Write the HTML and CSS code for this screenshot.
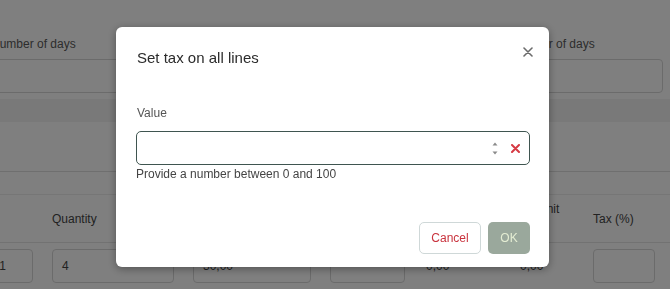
FILE: index.html
```html
<!DOCTYPE html>
<html>
<head>
<meta charset="utf-8">
<link rel="stylesheet" href="styles.css">
</head>
<body>
<div class="page">
  <div class="fields">
    <div class="field">
      <div class="field-label">Number of days</div>
      <div class="field-box"></div>
    </div>
    <div class="field">
      <div class="field-label">Number of days</div>
      <div class="field-box"></div>
    </div>
  </div>
  <div class="band"></div>
  <div class="blank"></div>
  <div class="sub"></div>
  <div class="lines-head">
    <div class="th"></div>
    <div class="th">Quantity</div>
    <div class="th"></div>
    <div class="th"></div>
    <div class="th"></div>
    <div class="th th-two">Per unit<br>price</div>
    <div class="th">Tax (%)</div>
  </div>
  <div class="lines-row">
    <div class="cell box end">1</div>
    <div class="cell box">4</div>
    <div class="cell box">30,00</div>
    <div class="cell box"></div>
    <div class="cell">0,00</div>
    <div class="cell">0,00</div>
    <div class="cell box"></div>
  </div>
</div>
<div class="overlay"></div>
<div class="modal">
  <div class="modal-head">
    <h2 class="modal-title">Set tax on all lines</h2>
    <button class="close" type="button" aria-label="Close">
      <svg width="10" height="10" viewBox="0 0 10 10"><path d="M1 1 L9 9 M9 1 L1 9" stroke="#6b6b6b" stroke-width="1.6" stroke-linecap="round"/></svg>
    </button>
  </div>
  <label class="value-label">Value</label>
  <div class="input">
    <span class="spin">
      <svg width="6" height="13" viewBox="0 0 6 13"><path d="M3 0.5 L5.5 3.5 L0.5 3.5 Z" fill="#8a8a8a"/><path d="M0.5 9.5 L5.5 9.5 L3 12.5 Z" fill="#8a8a8a"/></svg>
    </span>
    <span class="clear">
      <svg width="9" height="9" viewBox="0 0 9 9"><path d="M1 1 L8 8 M8 1 L1 8" stroke="#d63a43" stroke-width="2" stroke-linecap="round"/></svg>
    </span>
  </div>
  <div class="help">Provide a number between 0 and 100</div>
  <div class="modal-foot">
    <button class="btn btn-cancel" type="button">Cancel</button>
    <button class="btn btn-ok" type="button">OK</button>
  </div>
</div>
</body>
</html>
```

FILE: styles.css
```css
html, body {
  margin: 0;
  padding: 0;
  background: #ffffff;
  font-family: "Liberation Sans", Arial, sans-serif;
  overflow: hidden;
}
.page {
  width: 670px;
  height: 289px;
  overflow: hidden;
}
.fields {
  display: flex;
  justify-content: space-between;
  margin-left: -9px;
  width: 672px;
  padding-top: 36px;
  padding-bottom: 6px;
}
.field {
  width: 153px;
}
.field-label {
  font-size: 12px;
  line-height: 16px;
  color: #5a5a5a;
  margin-bottom: 7px;
}
.field-box {
  height: 32px;
  border: 1px solid #d6d6d6;
  border-radius: 4px;
}
.band {
  height: 23px;
  background: #f2f2f2;
}
.blank {
  height: 49px;
  border-bottom: 1px solid #dedede;
}
.sub {
  height: 22px;
  border-bottom: 1px solid #ececec;
}
.lines-head, .lines-row {
  display: grid;
  grid-template-columns: 73px 122px 118px 75px 75px 56px 62px;
  column-gap: 19px;
  margin-left: -40px;
}
.lines-head {
  height: 47px;
  align-items: center;
  border-bottom: 1px solid #e4e4e4;
}
.th {
  font-size: 12px;
  line-height: 20px;
  color: #444;
}
.th-two {
  white-space: nowrap;
}
.lines-row {
  margin-top: 6px;
  height: 34px;
}
.cell {
  font-size: 12px;
  color: #444;
  display: flex;
  align-items: center;
  padding-left: 2px;
}
.cell.box {
  border: 1px solid #d6d6d6;
  border-radius: 4px;
  padding-left: 9px;
}
.cell.end {
  justify-content: flex-end;
  padding-right: 26px;
}
.overlay {
  position: fixed;
  inset: 0;
  background: rgba(0, 0, 0, 0.5);
}
.modal {
  position: fixed;
  left: 116px;
  top: 27px;
  width: 433px;
  height: 240px;
  box-sizing: border-box;
  padding: 0 19px 13px 21px;
  background: #ffffff;
  border-radius: 6px;
  box-shadow: 0 2px 8px rgba(0, 0, 0, 0.35);
  display: flex;
  flex-direction: column;
}
.modal-head {
  display: flex;
  justify-content: space-between;
  align-items: flex-start;
}
.modal-title {
  margin: 21px 0 0 0;
  font-size: 15px;
  line-height: 20px;
  font-weight: normal;
  color: #2b2b2b;
}
.close {
  margin: 20px -3px 0 0;
  padding: 0;
  border: 0;
  background: none;
  width: 10px;
  height: 10px;
  display: flex;
}
.value-label {
  margin-top: 37px;
  font-size: 12px;
  line-height: 16px;
  color: #555;
}
.input {
  margin-top: 10px;
  margin-left: -1px;
  height: 34px;
  box-sizing: border-box;
  border: 1px solid #3f5550;
  border-radius: 5px;
  display: flex;
  align-items: center;
  justify-content: flex-end;
  padding-right: 9px;
  gap: 13px;
}
.spin {
  display: flex;
  margin-top: 1px;
}
.clear {
  display: flex;
  margin-top: 1px;
}
.help {
  margin-top: 1px;
  margin-left: -1px;
  font-size: 12px;
  line-height: 16px;
  color: #444;
}
.modal-foot {
  margin-top: auto;
  display: flex;
  justify-content: flex-end;
  gap: 7px;
}
.btn {
  height: 32px;
  border-radius: 5px;
  font-family: "Liberation Sans", Arial, sans-serif;
  font-size: 12px;
  padding: 0;
}
.btn-cancel {
  width: 62px;
  background: #ffffff;
  border: 1px solid #cfd8d8;
  color: #c9333e;
}
.btn-ok {
  width: 42px;
  background: #9aa89c;
  border: 0;
  color: #e4edd3;
}
```
